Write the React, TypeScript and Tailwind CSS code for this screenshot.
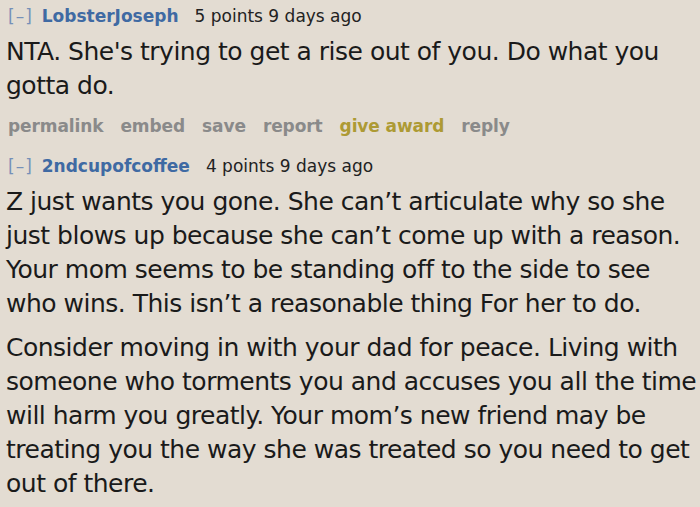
import * as React from 'react';

const FONT = "font-['DejaVu_Sans',Verdana,sans-serif]";

function CommentHeader({ author, points }: { author: string; points: string }) {
  return (
    <div className="flex items-baseline text-[17px] leading-[22px] whitespace-nowrap">
      <span className="text-[#7590b8] tracking-[1px]">[–]</span>
      <span className="ml-[9px] font-bold text-[#3f6aa3]">{author}</span>
      <span className="ml-[16px] text-[#222]">{points} 9 days ago</span>
    </div>
  );
}

function ActionLinks() {
  const links = ['permalink', 'embed', 'save', 'report', 'give award', 'reply'];
  return (
    <div className="flex gap-[17px] text-[17px] font-bold leading-[22px] tracking-[-0.1px] whitespace-nowrap">
      {links.map((l) => (
        <span key={l} className={l === 'give award' ? 'text-[#ad9a34]' : 'text-[#8a8a8a]'}>
          {l}
        </span>
      ))}
    </div>
  );
}

// lines broken where the screenshot breaks them
function Para({ lines }: { lines: string[] }) {
  return (
    <p className="whitespace-nowrap">
      {lines.map((l, i) => (
        <React.Fragment key={i}>
          {l}
          {i < lines.length - 1 && <br />}
        </React.Fragment>
      ))}
    </p>
  );
}

export default function App() {
  return (
    <div className={`w-[700px] h-[507px] overflow-hidden bg-[#e3dcd2] ${FONT} text-[#1a1a1a]`}>
      <div className="pl-[8px] pt-[5px]">
        <CommentHeader author="LobsterJoseph" points="5 points" />
      </div>
      <div className="pl-[6px] pt-[8px] text-[25px] leading-[34px] tracking-[-0.5px]">
        <Para lines={["NTA. She's trying to get a rise out of you. Do what you", 'gotta do.']} />
      </div>
      <div className="pl-[8px] pt-[12px]">
        <ActionLinks />
      </div>
      <div className="pl-[8px] pt-[18px]">
        <CommentHeader author="2ndcupofcoffee" points="4 points" />
      </div>
      <div className="pl-[6px] pt-[8px] text-[25px] leading-[34px] tracking-[-0.5px] flex flex-col gap-[10px]">
        <Para
          lines={[
            'Z just wants you gone. She can’t articulate why so she',
            'just blows up because she can’t come up with a reason.',
            'Your mom seems to be standing off to the side to see',
            'who wins. This isn’t a reasonable thing For her to do.',
          ]}
        />
        <Para
          lines={[
            'Consider moving in with your dad for peace. Living with',
            'someone who torments you and accuses you all the time',
            'will harm you greatly. Your mom’s new friend may be',
            'treating you the way she was treated so you need to get',
            'out of there.',
          ]}
        />
      </div>
    </div>
  );
}
